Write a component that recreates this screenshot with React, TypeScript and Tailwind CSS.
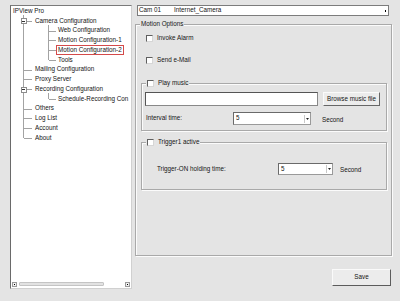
import React from 'react'

type TreeRow = {
  label: string
  level: 0 | 1 | 2
  selected?: boolean
}

const rows: TreeRow[] = [
  { label: 'IPView Pro', level: 0 },
  { label: 'Camera Configuration', level: 1 },
  { label: 'Web Configuration', level: 2 },
  { label: 'Motion Configuration-1', level: 2 },
  { label: 'Motion Configuration-2', level: 2, selected: true },
  { label: 'Tools', level: 2 },
  { label: 'Mailing Configuration', level: 1 },
  { label: 'Proxy Server', level: 1 },
  { label: 'Recording Configuration', level: 1 },
  { label: 'Schedule-Recording Con', level: 2 },
  { label: 'Others', level: 1 },
  { label: 'Log List', level: 1 },
  { label: 'Account', level: 1 },
  { label: 'About', level: 1 },
]

const ROW_H = 9.77
const cy = (i: number) => 5 + i * ROW_H

const TreeLines = () => {
  const level1 = [1, 6, 7, 8, 10, 11, 12, 13]
  const level2 = [2, 3, 4, 5, 9]
  return (
    <svg className="absolute left-0 top-0 pointer-events-none" width="122" height="140">
      <g stroke="#a3a3a3" strokeWidth="1" shapeRendering="crispEdges">
        <line x1="12.5" y1="9" x2="12.5" y2={cy(13)} />
        {level1.map((i) => (
          <line key={i} x1="12.5" y1={cy(i) + 0.5} x2="21" y2={cy(i) + 0.5} />
        ))}
        <line x1="37.5" y1={cy(1) + 4} x2="37.5" y2={cy(5)} />
        <line x1="37.5" y1={cy(8) + 4} x2="37.5" y2={cy(9)} />
        {level2.map((i) => (
          <line key={i} x1="37.5" y1={cy(i) + 0.5} x2="45" y2={cy(i) + 0.5} />
        ))}
      </g>
      {[1, 8].map((i) => (
        <g key={i}>
          <rect x="10" y={cy(i) - 2} width="5" height="5" fill="#fff" stroke="#8c8c8c" shapeRendering="crispEdges" />
          <line x1="11" y1={cy(i) + 0.5} x2="14" y2={cy(i) + 0.5} stroke="#333" shapeRendering="crispEdges" />
        </g>
      ))}
    </svg>
  )
}

const Checkbox = () => (
  <span className="block w-[7px] h-[7px] bg-white border border-t-[#5f5f5f] border-l-[#5f5f5f] border-r-[#d6d6d6] border-b-[#d6d6d6]" />
)

const SelectBox = ({ value, className }: { value: string; className: string }) => (
  <div
    className={`flex items-center justify-between bg-white border border-t-[#6a6a6a] border-l-[#6a6a6a] border-r-[#9a9a9a] border-b-[#9a9a9a] ${className}`}
  >
    <span className="pl-[2px] leading-none">{value}</span>
    <span className="mr-[1px] w-[5px] h-[8px] flex items-center justify-center border-l border-[#c8c8c8]">
      <svg width="3" height="2" viewBox="0 0 3 2">
        <path d="M0 0H3L1.5 2Z" fill="#222" />
      </svg>
    </span>
  </div>
)

const Group = ({
  legend,
  className,
  children,
}: {
  legend: React.ReactNode
  className: string
  children?: React.ReactNode
}) => (
  <div
    className={`relative border border-[#a9a9a9] shadow-[inset_1px_1px_0_#fbfbfb,1px_1px_0_#fbfbfb] ${className}`}
  >
    <div className="absolute left-[4px] top-[-4px] flex items-center gap-[4px] bg-[#e4e4e4] px-[1px] h-[7px]">
      {legend}
    </div>
    {children}
  </div>
)

const App = () => {
  return (
    <div className="w-[400px] h-[301px] bg-[#e4e4e4] flex text-[6.3px] text-[#141414] font-['Liberation_Sans',Arial,sans-serif] overflow-hidden">
      {/* left: tree */}
      <div className="w-[134px] pl-[10px] pt-[5px]">
        <div className="w-[122px] h-[284px] bg-white border border-t-[#7a7a7a] border-l-[#6a6a6a] border-r-[#d0d0d0] border-b-[#d0d0d0] flex flex-col justify-between">
          <div className="relative">
            <TreeLines />
            {rows.map((r) => (
              <div
                key={r.label}
                className={`h-[9.77px] flex items-center whitespace-nowrap ${
                  r.level === 0 ? 'pl-0' : r.level === 1 ? 'pl-[22px]' : 'pl-[45px]'
                }`}
              >
                <span
                  className={`leading-none px-[1px] py-[1px] border ${
                    r.selected ? 'border-[#d44a4a]' : 'border-transparent'
                  }`}
                >
                  {r.label}
                </span>
              </div>
            ))}
          </div>
          <div className="h-[6px] mb-[1px] mx-[1px] flex items-center">
            <span className="w-[5px] h-[5px] border border-[#9a9a9a] bg-[#f0f0f0] flex items-center justify-center">
              <span className="block w-[1px] h-[1px] bg-black" />
            </span>
            <span className="ml-[2px] w-[85px] h-[4px] bg-[#e2e2e2] border border-[#c4c4c4] rounded-[1px]" />
            <span className="flex-1" />
            <span className="w-[5px] h-[5px] border border-[#9a9a9a] bg-[#f0f0f0] flex items-center justify-center">
              <span className="block w-[1px] h-[1px] bg-black" />
            </span>
          </div>
        </div>
      </div>

      {/* right: settings */}
      <div className="w-[260px] pt-[5px] flex flex-col">
        <div className="ml-[3px] w-[252px] h-[11px] bg-white border border-[#7c7c7c] flex items-center justify-between">
          <div className="flex items-center pl-[1px] gap-[13px] leading-none">
            <span>Cam 01</span>
            <span>Internet_Camera</span>
          </div>
          <span className="mr-[1px] w-[3px] h-[3px] flex items-center justify-center">
            <span className="block w-[1px] h-[2px] bg-black" />
          </span>
        </div>

        <Group legend={<span className="leading-none">Motion Options</span>} className="mt-[8px] ml-[1px] w-[257px] h-[232px]">
          <div className="flex flex-col">
            <div className="mt-[10px] ml-[10px] h-[7px] flex items-center gap-[4px]">
              <Checkbox />
              <span className="leading-none">Invoke Alarm</span>
            </div>
            <div className="mt-[15px] ml-[10px] h-[7px] flex items-center gap-[4px]">
              <Checkbox />
              <span className="leading-none">Send e-Mail</span>
            </div>

            <Group
              legend={
                <>
                  <Checkbox />
                  <span className="leading-none">Play music</span>
                </>
              }
              className="mt-[19px] ml-[5px] w-[246px] h-[48px]"
            >
              <div className="mt-[8px] flex items-center">
                <div className="ml-[3px] w-[173px] h-[14px] bg-white border border-t-[#555] border-l-[#555] border-r-[#888] border-b-[#888]" />
                <button className="ml-[5px] w-[57px] h-[14px] bg-[#ececec] border border-t-[#fafafa] border-l-[#fafafa] border-r-[#666] border-b-[#666] leading-none">
                  Browse music file
                </button>
              </div>
              <div className="mt-[6px] flex items-center">
                <span className="ml-[4px] w-[87px] leading-none">Interval time:</span>
                <SelectBox value="5" className="w-[78px] h-[13px]" />
                <span className="ml-[11px] mt-[3px] leading-none">Second</span>
              </div>
            </Group>

            <Group
              legend={
                <>
                  <Checkbox />
                  <span className="leading-none">Trigger1 active</span>
                </>
              }
              className="mt-[11px] ml-[5px] w-[246px] h-[48px]"
            >
              <div className="mt-[20px] flex items-center">
                <span className="ml-[15px] w-[121px] leading-none">Trigger-ON holding time:</span>
                <SelectBox value="5" className="w-[55px] h-[12px]" />
                <span className="ml-[7px] mt-[2px] leading-none">Second</span>
              </div>
            </Group>
          </div>
        </Group>

        <button className="mt-[13px] ml-[198px] w-[59px] h-[17px] bg-[#ececec] border border-t-[#fafafa] border-l-[#fafafa] border-r-[#5c5c5c] border-b-[#5c5c5c] leading-none">
          Save
        </button>
      </div>
    </div>
  )
}

export default App
